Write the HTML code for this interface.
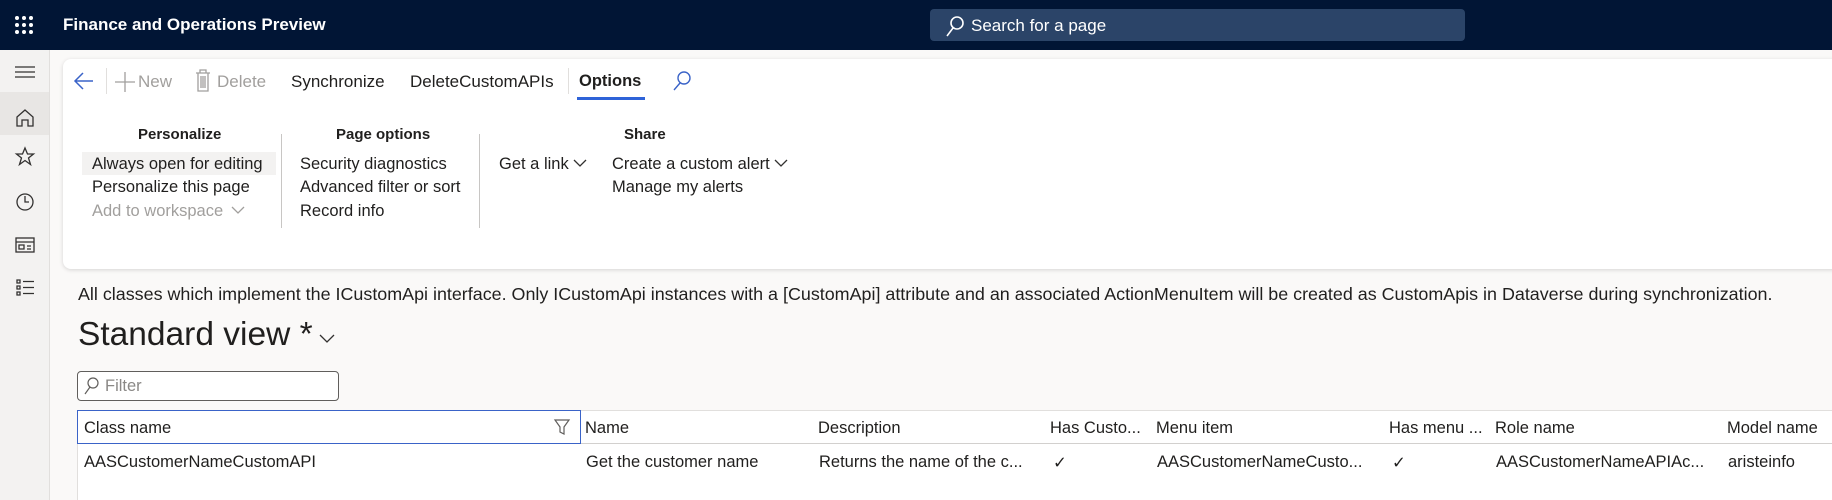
<!DOCTYPE html>
<html><head><meta charset="utf-8"><style>
*{box-sizing:border-box;margin:0;padding:0}
body{width:1832px;height:500px;overflow:hidden;background:#faf9f8;font-family:"Liberation Sans",sans-serif;color:#201f1e;position:relative}
.a{position:absolute;white-space:nowrap}
.top{position:absolute;left:0;top:0;width:1832px;height:50px;background:#011535}
.rail{position:absolute;left:0;top:50px;width:50px;height:450px;background:#f3f2f1;border-right:1px solid #e1dfdd}
.card{position:absolute;left:63px;top:59px;width:1800px;height:210px;background:#fff;border-radius:8px;box-shadow:0 1px 4px rgba(0,0,0,.15)}
.t{font-size:17px}
.g{color:#a19f9d}
.b{font-weight:bold;font-size:15px}
.sep{position:absolute;width:1px;background:#c8c6c4}
</style></head><body>
<div class="top"></div>
<svg class="a" style="left:14px;top:15px" width="20" height="20" fill="#fff"><circle cx="3" cy="3" r="2"/><circle cx="10" cy="3" r="2"/><circle cx="17" cy="3" r="2"/><circle cx="3" cy="10" r="2"/><circle cx="10" cy="10" r="2"/><circle cx="17" cy="10" r="2"/><circle cx="3" cy="17" r="2"/><circle cx="10" cy="17" r="2"/><circle cx="17" cy="17" r="2"/></svg>
<div class="a" style="left:63px;top:15px;color:#fff;font-size:17px;font-weight:bold">Finance and Operations Preview</div>
<div class="a" style="left:930px;top:9px;width:535px;height:32px;background:#2b4468;border-radius:4px"></div>
<svg class="a" style="left:945px;top:15px" width="20" height="22" fill="none" stroke="#fff" stroke-width="1.6"><circle cx="12" cy="8" r="6"/><path d="M8 13L2 21"/></svg>
<div class="a" style="left:971px;top:16px;color:#fff;font-size:17px">Search for a page</div>

<div class="rail"></div>
<div class="a" style="left:0;top:92px;width:49px;height:43px;background:#e8e6e4"></div>
<svg class="a" style="left:0;top:50px" width="50" height="260" fill="none" stroke="#323130" stroke-width="1.3">
<path d="M15 17h20M15 22h20M15 27h20"/>
<path d="M17 67l8-7 8 7v9h-5v-6h-6v6h-5z"/>
<path d="M25 98l2.5 6h6l-5 4 2 6.5-5.5-4-5.5 4 2-6.5-5-4h6z"/>
<circle cx="25" cy="152" r="8"/><path d="M25 146v6h4"/>
<rect x="16" y="188" width="18" height="14"/><path d="M16 192h18M19 195h5v4h-5zM27 196h4M27 199h4"/>
<path d="M17 230h3v3h-3zM17 236h3v3h-3zM17 242h3v3h-3zM23 231.5h11M23 237.5h11M23 243.5h11"/>
</svg>

<div class="card"></div>
<svg class="a" style="left:73px;top:70px" width="24" height="22" fill="none" stroke="#3a63c8" stroke-width="1.5"><path d="M20 11H3M10 3l-8 8 8 8"/></svg>
<div class="sep" style="left:106px;top:68px;height:26px;background:#e1dfdd"></div>
<svg class="a" style="left:113px;top:70px" width="24" height="24" stroke="#a19f9d" stroke-width="1.3"><path d="M12 2v20M2 12h20"/></svg>
<div class="a t g" style="left:138px;top:72px">New</div>
<svg class="a" style="left:195px;top:69px" width="16" height="24" fill="none" stroke="#a19f9d" stroke-width="1.3"><path d="M1 4h14M5 4V1h6v3M3 4v18h10V4M6 7v12M8 7v12M10 7v12"/></svg>
<div class="a t g" style="left:217px;top:72px">Delete</div>
<div class="a t" style="left:291px;top:72px">Synchronize</div>
<div class="a t" style="left:410px;top:72px">DeleteCustomAPIs</div>
<div class="sep" style="left:568px;top:68px;height:26px;background:#e1dfdd"></div>
<div class="a t" style="left:579px;top:72px;font-weight:bold;font-size:16.5px">Options</div>
<div class="a" style="left:577px;top:97px;width:68px;height:3px;background:#2f63d8"></div>
<svg class="a" style="left:671px;top:70px" width="22" height="22" fill="none" stroke="#3a63c8" stroke-width="1.4"><circle cx="13" cy="8" r="6"/><path d="M9 13L3 20"/></svg>

<div class="a b" style="left:138px;top:126px">Personalize</div>
<div class="a b" style="left:336px;top:126px">Page options</div>
<div class="a b" style="left:624px;top:126px">Share</div>
<div class="sep" style="left:281px;top:134px;height:94px"></div>
<div class="sep" style="left:479px;top:134px;height:94px"></div>
<div class="a" style="left:82px;top:152px;width:194px;height:23px;background:#f3f2f1"></div>
<div class="a t" style="left:92px;top:155px;font-size:16.5px">Always open for editing</div>
<div class="a t" style="left:92px;top:178px;font-size:16.5px">Personalize this page</div>
<div class="a t g" style="left:92px;top:202px;font-size:16.5px">Add to workspace</div>
<svg class="a" style="left:230px;top:205px" width="16" height="10" fill="none" stroke="#a19f9d" stroke-width="1.3"><path d="M2 2l6 6 6-6"/></svg>
<div class="a t" style="left:300px;top:155px;font-size:16.5px">Security diagnostics</div>
<div class="a t" style="left:300px;top:178px;font-size:16.5px">Advanced filter or sort</div>
<div class="a t" style="left:300px;top:202px;font-size:16.5px">Record info</div>
<div class="a t" style="left:499px;top:155px;font-size:16.5px">Get a link</div>
<svg class="a" style="left:572px;top:158px" width="16" height="10" fill="none" stroke="#323130" stroke-width="1.3"><path d="M2 2l6 6 6-6"/></svg>
<div class="a t" style="left:612px;top:155px;font-size:16.5px">Create a custom alert</div>
<svg class="a" style="left:773px;top:158px" width="16" height="10" fill="none" stroke="#323130" stroke-width="1.3"><path d="M2 2l6 6 6-6"/></svg>
<div class="a t" style="left:612px;top:178px;font-size:16.5px">Manage my alerts</div>

<div class="a" style="left:78px;top:284px;font-size:17.9px">All classes which implement the ICustomApi interface. Only ICustomApi instances with a [CustomApi] attribute and an associated ActionMenuItem will be created as CustomApis in Dataverse during synchronization.</div>
<div class="a" style="left:78px;top:316px;font-size:33.5px">Standard view *</div>
<svg class="a" style="left:318px;top:332px" width="18" height="12" fill="none" stroke="#323130" stroke-width="1.3"><path d="M2 3l7 7 7-7"/></svg>
<div class="a" style="left:77px;top:371px;width:262px;height:30px;border:1px solid #605e5c;border-radius:4px;background:#fff"></div>
<svg class="a" style="left:83px;top:377px" width="16" height="18" fill="none" stroke="#605e5c" stroke-width="1.2"><circle cx="10" cy="6" r="5"/><path d="M7 10L2 17"/></svg>
<div class="a g" style="left:105px;top:377px;font-size:16.5px;color:#8a8886">Filter</div>

<div class="a" style="left:77px;top:410px;width:1760px;height:90px;background:#fff;border-top:1px solid #e1dfdd;border-left:1px solid #e1dfdd"></div>
<div class="a" style="left:77px;top:443px;width:1760px;height:1px;background:#d2d0ce"></div>
<div class="a" style="left:77px;top:410px;width:504px;height:34px;border:1px solid #3a63c8"></div>
<svg class="a" style="left:553px;top:418px" width="18" height="18" fill="none" stroke="#605e5c" stroke-width="1.2"><path d="M2 2h14l-5 7v7l-4-2V9z"/></svg>
<div style="font-size:16.5px">
<div class="a" style="left:84px;top:419px">Class name</div>
<div class="a" style="left:585px;top:419px">Name</div>
<div class="a" style="left:818px;top:419px">Description</div>
<div class="a" style="left:1050px;top:419px">Has Custo...</div>
<div class="a" style="left:1156px;top:419px">Menu item</div>
<div class="a" style="left:1389px;top:419px">Has menu ...</div>
<div class="a" style="left:1495px;top:419px">Role name</div>
<div class="a" style="left:1727px;top:419px">Model name</div>
<div class="a" style="left:84px;top:453px">AASCustomerNameCustomAPI</div>
<div class="a" style="left:586px;top:453px">Get the customer name</div>
<div class="a" style="left:819px;top:453px">Returns the name of the c...</div>
<div class="a" style="left:1053px;top:453px">✓</div>
<div class="a" style="left:1157px;top:453px">AASCustomerNameCusto...</div>
<div class="a" style="left:1392px;top:453px">✓</div>
<div class="a" style="left:1496px;top:453px">AASCustomerNameAPIAc...</div>
<div class="a" style="left:1728px;top:453px">aristeinfo</div>
</div>
</body></html>
